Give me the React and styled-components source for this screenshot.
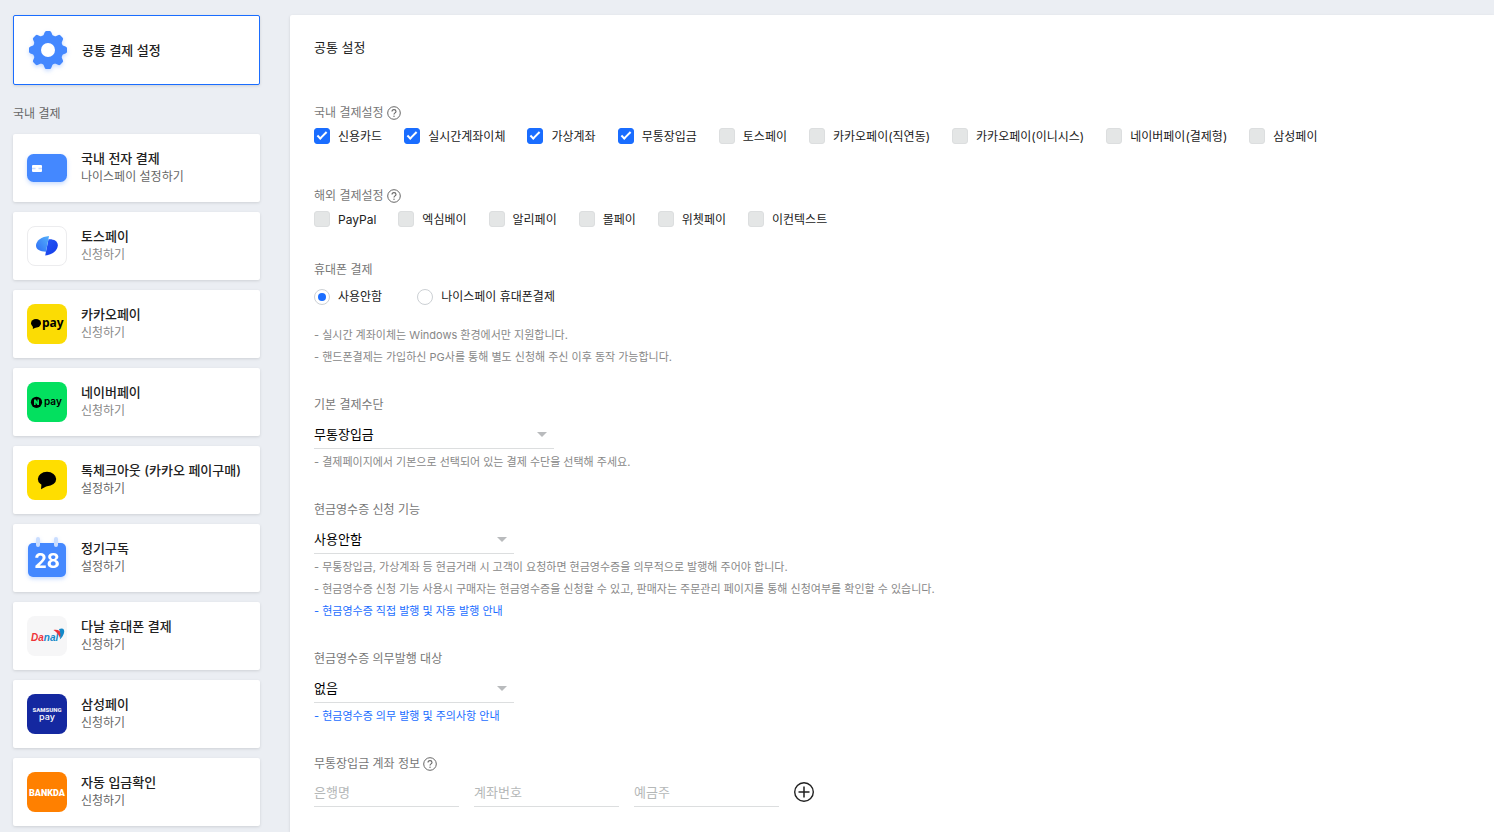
import { useId, useState } from "react";
import styled, { createGlobalStyle } from "styled-components";

const GlobalStyle = createGlobalStyle`
  * {
    box-sizing: border-box;
  }
  body {
    margin: 0;
    background-color: #ebeef3;
    color: #212121;
    font-family: Inter, "Noto Sans CJK KR", sans-serif;
    font-size: 12px;
  }
  button,
  input,
  select {
    font-family: inherit;
  }
`;

const domesticServices = [
  { name: "국내 전자 결제", status: "나이스페이 설정하기", Icon: CardIcon, active: true },
  { name: "토스페이", status: "신청하기", Icon: TossIcon },
  { name: "카카오페이", status: "신청하기", Icon: KakaoPayIcon },
  { name: "네이버페이", status: "신청하기", Icon: NaverPayIcon },
  { name: "톡체크아웃 (카카오 페이구매)", status: "설정하기", Icon: TalkIcon, active: true },
  { name: "정기구독", status: "설정하기", Icon: CalendarIcon, active: true },
  { name: "다날 휴대폰 결제", status: "신청하기", Icon: DanalIcon, active: true },
  { name: "삼성페이", status: "신청하기", Icon: SamsungIcon, active: true },
  { name: "자동 입금확인", status: "신청하기", Icon: BankdaIcon, active: true },
];

const domesticMethods = [
  { name: "신용카드", enabled: true },
  { name: "실시간계좌이체", enabled: true },
  { name: "가상계좌", enabled: true },
  { name: "무통장입금", enabled: true },
  { name: "토스페이" },
  { name: "카카오페이(직연동)" },
  { name: "카카오페이(이니시스)" },
  { name: "네이버페이(결제형)" },
  { name: "삼성페이" },
];

const overseasMethods = [
  { name: "PayPal" },
  { name: "엑심베이" },
  { name: "알리페이" },
  { name: "몰페이" },
  { name: "위쳇페이" },
  { name: "이컨텍스트" },
];

function App() {
  return (
    <>
      <GlobalStyle />
      <Page>
        <Sidebar />
        <CommonSettings />
      </Page>
    </>
  );
}

export default App;

function Sidebar() {
  return (
    <SidebarNav>
      <ServiceCard href="#common" $selected>
        <GearIcon />
        <ServiceName>공통 결제 설정</ServiceName>
      </ServiceCard>
      <SidebarTitle>국내 결제</SidebarTitle>
      <ServiceList>
        {domesticServices.map(({ name, status, Icon, active }) => (
          <li key={name}>
            <ServiceCard href="#service">
              <Icon />
              <ServiceText>
                <ServiceName>{name}</ServiceName>
                <ServiceStatus $active={active}>{status}</ServiceStatus>
              </ServiceText>
            </ServiceCard>
          </li>
        ))}
      </ServiceList>
    </SidebarNav>
  );
}

function CommonSettings() {
  const [phone, setPhone] = useState("none");

  return (
    <Panel>
      <PanelTitle>공통 설정</PanelTitle>

      <Field $gap={35}>
        <FieldLabel>
          국내 결제설정 <HelpButton />
        </FieldLabel>
        <CheckList methods={domesticMethods} />
      </Field>

      <Field>
        <FieldLabel>
          해외 결제설정 <HelpButton />
        </FieldLabel>
        <CheckList methods={overseasMethods} />
      </Field>

      <Field>
        <FieldLabel>휴대폰 결제</FieldLabel>
        <RadioRow>
          <Option>
            <Radio
              type="radio"
              name="phone"
              checked={phone === "none"}
              onChange={() => setPhone("none")}
            />
            사용안함
          </Option>
          <Option>
            <Radio
              type="radio"
              name="phone"
              checked={phone === "nicepay"}
              onChange={() => setPhone("nicepay")}
            />
            나이스페이 휴대폰결제
          </Option>
        </RadioRow>
        <Help>- 실시간 계좌이체는 Windows 환경에서만 지원합니다.</Help>
        <Help>
          - 핸드폰결제는 가입하신 PG사를 통해 별도 신청해 주신 이후 동작 가능합니다.
        </Help>
      </Field>

      <SelectField
        label="기본 결제수단"
        width={240}
        options={["무통장입금", "신용카드", "실시간계좌이체", "가상계좌"]}
      >
        <Help>- 결제페이지에서 기본으로 선택되어 있는 결제 수단을 선택해 주세요.</Help>
      </SelectField>

      <SelectField
        label="현금영수증 신청 기능"
        width={200}
        options={["사용안함", "사용함"]}
      >
        <Help>
          - 무통장입금, 가상계좌 등 현금거래 시 고객이 요청하면 현금영수증을 의무적으로
          발행해 주어야 합니다.
        </Help>
        <Help>
          - 현금영수증 신청 기능 사용시 구매자는 현금영수증을 신청할 수 있고, 판매자는
          주문관리 페이지를 통해 신청여부를 확인할 수 있습니다.
        </Help>
        <Help>
          <GuideLink href="#receipt-guide">
            - 현금영수증 직접 발행 및 자동 발행 안내
          </GuideLink>
        </Help>
      </SelectField>

      <SelectField
        label="현금영수증 의무발행 대상"
        width={200}
        options={["없음", "있음"]}
      >
        <Help>
          <GuideLink href="#duty-guide">
            - 현금영수증 의무 발행 및 주의사항 안내
          </GuideLink>
        </Help>
      </SelectField>

      <Field>
        <FieldLabel>
          무통장입금 계좌 정보 <HelpButton />
        </FieldLabel>
        <AccountRow>
          <TextInput type="text" placeholder="은행명" aria-label="은행명" />
          <TextInput type="text" placeholder="계좌번호" aria-label="계좌번호" />
          <TextInput type="text" placeholder="예금주" aria-label="예금주" />
          <IconButton type="button" aria-label="계좌 추가">
            <svg width="20" height="20" viewBox="1 1 20 20" fill="none" stroke="#212121">
              <circle cx="11" cy="11" r="9.3" strokeWidth="1.4" />
              <path d="M11 5.5v11M5.5 11h11" strokeWidth="1.5" />
            </svg>
          </IconButton>
        </AccountRow>
      </Field>
    </Panel>
  );
}

function CheckList({ methods }) {
  return (
    <CheckRow>
      {methods.map(({ name, enabled }) => (
        <Option key={name}>
          <Checkbox type="checkbox" defaultChecked={enabled} disabled={!enabled} />
          {name}
        </Option>
      ))}
    </CheckRow>
  );
}

function SelectField({ label, width, options, children }) {
  const id = useId();

  return (
    <Field>
      <FieldLabel as="label" htmlFor={id}>
        {label}
      </FieldLabel>
      <SelectBox $width={width}>
        <Select id={id}>
          {options.map((option) => (
            <option key={option}>{option}</option>
          ))}
        </Select>
        <svg width="10" height="5" viewBox="0 0 10 5">
          <path d="M0 0h10L5 5z" fill="#b9bbbd" />
        </svg>
      </SelectBox>
      {children}
    </Field>
  );
}

function HelpButton() {
  return (
    <IconButton type="button" aria-label="도움말">
      <svg width="14" height="14" viewBox="0 0 14 14" fill="none" stroke="#666">
        <circle cx="7" cy="7" r="6.3" strokeWidth="1" />
        <path
          d="M5 5.6C5 4.3 5.9 3.6 7 3.6s2 .7 2 1.8c0 1.4-2 1.5-2 3"
          strokeWidth="1.1"
        />
        <circle cx="7" cy="10.2" r=".7" fill="#666" stroke="none" />
      </svg>
    </IconButton>
  );
}

function GearIcon() {
  return (
    <Logo viewBox="0 0 40 40" $shadow>
      <g fill="#4488ff">
        {[0, 45, 90, 135].map((angle) => (
          <path
            key={angle}
            transform={`rotate(${angle} 20 20)`}
            d="M15 6.500l1.600-4q.4-1.500 1.700-1.500h3.400q1.300 0 1.700 1.500L25 6.500v27l-1.600 4q-.4 1.500-1.700 1.500h-3.400q-1.300 0-1.700-1.500L15 33.500z"
          />
        ))}
        <circle cx="20" cy="20" r="15.3" />
      </g>
      <circle cx="20" cy="20" r="7" fill="#fff" />
    </Logo>
  );
}

function CardIcon() {
  return (
    <Logo viewBox="0 0 40 40" $shadow>
      <rect y="6" width="40" height="28" rx="6.500" fill="#4488ff" />
      <rect x="5" y="17" width="10" height="7" rx="1" fill="#fff" />
      <path d="M5 20.500h3.500M11.500 20.500H15" stroke="#c4d9ff" strokeWidth="1.4" />
    </Logo>
  );
}

function TossIcon() {
  return (
    <Logo viewBox="0 0 40 40">
      <defs>
        <linearGradient id="tossLeft" x1="1" y1="0" x2="0" y2="1">
          <stop offset="0" stopColor="#55b0fb" />
          <stop offset="1" stopColor="#2d6df6" />
        </linearGradient>
        <linearGradient id="tossRight" x1="0" y1="0" x2="1" y2="1">
          <stop offset="0" stopColor="#2457f5" />
          <stop offset="1" stopColor="#143be8" />
        </linearGradient>
      </defs>
      <rect x=".5" y=".5" width="39" height="39" rx="7.500" fill="#fff" stroke="#ececee" />
      <path
        d="M21.500 13.300c5-.4 9.300 1.700 9.300 5.900 0 5-5.200 9.500-12.600 10.300z"
        fill="url(#tossRight)"
      />
      <path
        d="M22 10c-7.500.6-13 4.700-13 9.700 0 3.700 4.100 5.900 10 6z"
        fill="url(#tossLeft)"
      />
    </Logo>
  );
}

function KakaoPayIcon() {
  return (
    <Logo viewBox="0 0 40 40">
      <rect width="40" height="40" rx="8" fill="#fbdc04" />
      <ellipse cx="9" cy="19.300" rx="5" ry="4.200" />
      <path d="M6 21.500L5.800 25l4-2z" />
      <LogoText x="15" y="23" $size={12}>
        pay
      </LogoText>
    </Logo>
  );
}

function NaverPayIcon() {
  return (
    <Logo viewBox="0 0 40 40">
      <rect width="40" height="40" rx="8" fill="#03e05f" />
      <circle cx="9.500" cy="20.300" r="5.600" />
      <path d="M7 23v-5.400h1.800l1.600 2.500v-2.500H12V23h-1.700l-1.600-2.500V23z" fill="#03e05f" />
      <LogoText x="17" y="23" $size={10} $family="Inter" $weight={600}>
        pay
      </LogoText>
    </Logo>
  );
}

function TalkIcon() {
  return (
    <Logo viewBox="0 0 40 40">
      <rect width="40" height="40" rx="8" fill="#ffde00" />
      <ellipse cx="20" cy="19" rx="9.200" ry="7.200" />
      <path d="M14.500 23.500L14 29.300l6.500-3.500z" />
    </Logo>
  );
}

function CalendarIcon() {
  return (
    <Logo viewBox="0 0 40 40" $shadow>
      <rect x="1" y="5" width="38" height="34" rx="5" fill="#4488ff" />
      <path
        d="M11 1v6M29 1v6"
        stroke="#c9ddff"
        strokeWidth="4"
        strokeLinecap="round"
      />
      <LogoText x="20" y="29.500" $size={20} $family="Inter" $fill="#fff" textAnchor="middle">
        28
      </LogoText>
    </Logo>
  );
}

function DanalIcon() {
  return (
    <Logo viewBox="0 0 40 40">
      <rect width="40" height="40" rx="8" fill="#f6f6f7" />
      <LogoText x="4" y="25" $size={10} $fill="#1489c9" $family='"Liberation Sans"' $italic>
        <tspan fill="#ee3338">Da</tspan>nal
      </LogoText>
      <path d="M26.500 14c4.500-.8 7.300 1 8 4.500l-1.500 3.500c-1.500-3.700-3-5.500-6.500-8z" fill="#ee3338" />
      <path d="M32 13c4-1.700 6 .3 5 4-.7 2.600-2 4.600-4.200 6.500.8-3.500 1-7-.8-10.500z" fill="#1489c9" />
    </Logo>
  );
}

function SamsungIcon() {
  return (
    <Logo viewBox="0 0 40 40">
      <rect width="40" height="40" rx="8" fill="#1428a0" />
      <LogoText x="20" y="18" $size={6} $fill="#e8eaf6" $family="Roboto" $weight={900} textAnchor="middle">
        SAMSUNG
      </LogoText>
      <LogoText x="20" y="26" $size={9} $fill="#fff" $family="Inter" $weight={500} textAnchor="middle">
        pay
      </LogoText>
    </Logo>
  );
}

function BankdaIcon() {
  return (
    <Logo viewBox="0 0 40 40">
      <rect width="40" height="40" rx="8" fill="#ff8000" />
      <LogoText
        x="20"
        y="24"
        $size={9}
        $fill="#fff"
        $family='"Liberation Sans Narrow", Roboto'
        $weight={900}
        textAnchor="middle"
      >
        BANKDA
      </LogoText>
    </Logo>
  );
}

const Page = styled.div`
  display: flex;
  align-items: stretch;
  gap: 30px;
  min-height: 100vh;
  padding: 15px 0 0 13px;
`;

const SidebarNav = styled.nav`
  flex: 0 0 247px;
`;

const SidebarTitle = styled.h2`
  margin: 19px 0 10px;
  color: #666;
  font-size: 12px;
  font-weight: 400;
  line-height: 20px;
`;

const ServiceList = styled.ul`
  display: flex;
  flex-direction: column;
  gap: 10px;
  margin: 0;
  padding: 0;
  list-style: none;
`;

const ServiceCard = styled.a`
  display: flex;
  align-items: center;
  gap: 14px;
  height: ${(props) => (props.$selected ? "70px" : "68px")};
  padding: 0 14px;
  border: ${(props) => (props.$selected ? "1px solid #1a6dff" : "none")};
  border-radius: 2px;
  background-color: #fff;
  color: inherit;
  text-decoration: none;
  box-shadow: 0 1px 3px rgba(0, 0, 0, 0.12);
`;

const ServiceText = styled.div`
  display: flex;
  flex-direction: column;
`;

const ServiceName = styled.strong`
  font-size: 13px;
  font-weight: 500;
  line-height: 18px;
  white-space: nowrap;
`;

const ServiceStatus = styled.span`
  color: ${(props) => (props.$active ? "#666" : "#888")};
  font-size: 12px;
  line-height: 20px;
`;

const Logo = styled.svg`
  flex: none;
  width: 40px;
  height: 40px;
  overflow: visible;
  filter: ${(props) =>
    props.$shadow ? "drop-shadow(0 2px 2px rgba(68, 136, 255, 0.3))" : "none"};
`;

const LogoText = styled.text`
  fill: ${(props) => props.$fill || "#000"};
  font-family: ${(props) => props.$family || '"Open Sans"'}, sans-serif;
  font-size: ${(props) => props.$size}px;
  font-weight: ${(props) => props.$weight || 700};
  font-style: ${(props) => (props.$italic ? "italic" : "normal")};
`;

const Panel = styled.main`
  flex: 1;
  min-width: 0;
  padding: 22px 24px 0;
  border-radius: 2px 0 0 0;
  background-color: #fff;
  box-shadow: 0 1px 3px rgba(0, 0, 0, 0.12);
`;

const PanelTitle = styled.h1`
  margin: 0 0 45px;
  font-size: 13px;
  font-weight: 400;
  line-height: 20px;
`;

const Field = styled.section`
  margin-bottom: ${(props) => props.$gap || 26}px;

  &:last-child {
    margin-bottom: 0;
  }
`;

const FieldLabel = styled.div`
  display: flex;
  align-items: center;
  gap: 3px;
  color: #777;
  font-size: 12px;
  line-height: 22px;
`;

const CheckRow = styled.div`
  display: flex;
  flex-wrap: wrap;
  gap: 0 22px;
`;

const RadioRow = styled.div`
  display: flex;
  gap: 35px;
  margin: 3px 0 14px;
`;

const Option = styled.label`
  display: flex;
  align-items: flex-start;
  gap: 8px;
  font-size: 12px;
  line-height: 26px;
  white-space: nowrap;
`;

const Checkbox = styled.input`
  appearance: none;
  display: grid;
  place-items: center;
  flex: none;
  width: 16px;
  height: 16px;
  margin: 4px 0 0;
  border: 1px solid #dcdedf;
  border-radius: 3px;
  background-color: #e4e6e6;

  &:checked {
    border-color: #1a6dff;
    background-color: #1a6dff;
  }

  &:checked::before {
    content: "";
    width: 8px;
    height: 3px;
    margin-bottom: 3px;
    border: solid #fff;
    border-width: 0 0 2px 2px;
    transform: rotate(-45deg);
  }
`;

const Radio = styled.input`
  appearance: none;
  display: grid;
  place-items: center;
  flex: none;
  width: 16px;
  height: 16px;
  margin: 5px 0 0;
  border: 1px solid #ccd0d4;
  border-radius: 50%;
  background-color: #fff;

  &:checked::before {
    content: "";
    width: 8px;
    height: 8px;
    border-radius: 50%;
    background-color: #1a6dff;
  }
`;

const SelectBox = styled.div`
  display: flex;
  align-items: center;
  width: ${(props) => props.$width}px;
  max-width: 100%;
  height: 29px;
  margin: 4px 0 2px;
  padding-right: 7px;
  border-bottom: 1px solid #dcdedf;
`;

const Select = styled.select`
  appearance: none;
  flex: 1;
  height: 28px;
  padding: 0;
  border: none;
  outline: none;
  background: none;
  color: #000;
  font-size: 13px;
`;

const Help = styled.p`
  margin: 0;
  color: #888;
  font-size: 11px;
  line-height: 22px;
`;

const GuideLink = styled.a`
  color: #1a6dff;
  text-decoration: none;
`;

const AccountRow = styled.div`
  display: flex;
  align-items: center;
  gap: 15px;
  margin-top: 2px;
`;

const TextInput = styled.input`
  width: 145px;
  height: 30px;
  padding: 0;
  border: none;
  border-bottom: 1px solid #dcdedf;
  outline: none;
  color: #212121;
  font-size: 13px;

  &::placeholder {
    color: #b5b8b8;
  }
`;

const IconButton = styled.button`
  display: flex;
  padding: 0;
  border: none;
  background: none;
  cursor: pointer;
`;
